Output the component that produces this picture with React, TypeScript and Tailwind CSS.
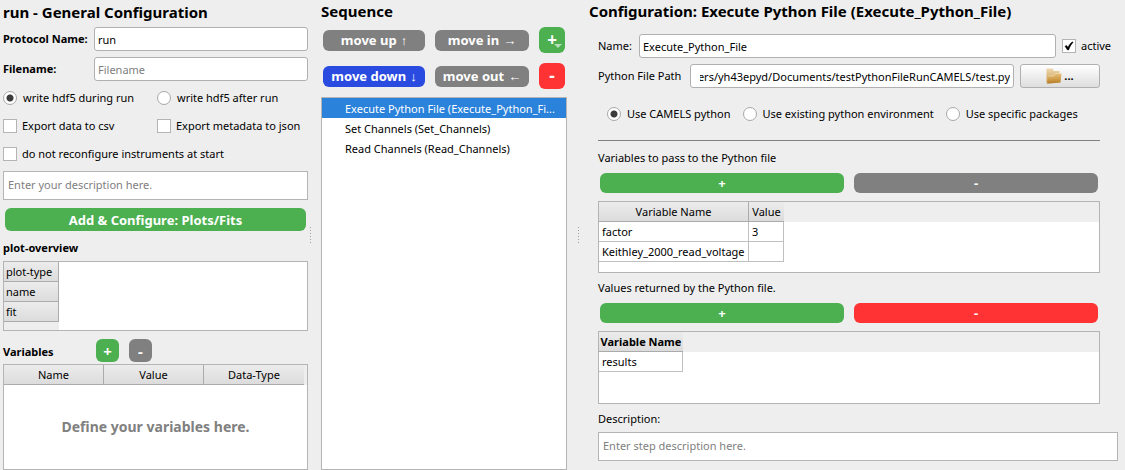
import React from "react";
import type { ReactNode } from "react";

const greys = "border border-[#b4b4b4]";
const headerCell = "h-5 border-b border-[#ababab] bg-linear-to-b from-[#ececec] to-[#dcdcdc] p-0";
const field = "h-6 min-w-0 rounded-[3px] border border-[#b0b0b0] bg-white px-[3px] pt-px placeholder:text-[#808080] outline-none";
const area = "block h-[29px] w-full resize-none overflow-hidden border border-[#b4b4b4] bg-white px-1 py-[5px] placeholder:text-[#808080] outline-none";

const buttonColors = {
  green: "bg-[#4caf50]",
  gray: "bg-[#808080]",
  blue: "bg-[#2a4be0]",
  red: "bg-[#ff3333]",
};

function ColorButton({ color, className, label, children }: { color: keyof typeof buttonColors; className: string; label?: string; children: ReactNode }) {
  return (
    <button type="button" aria-label={label} className={`flex items-center justify-center rounded-md font-bold whitespace-nowrap text-white ${buttonColors[color]} ${className}`}>
      {children}
    </button>
  );
}

function Radio({ name, label, checked = false }: { name: string; label: string; checked?: boolean }) {
  return (
    <label className="flex h-[14px] items-center gap-[6px] whitespace-nowrap">
      <input
        type="radio"
        name={name}
        defaultChecked={checked}
        className="size-[14px] shrink-0 appearance-none rounded-full border border-[#a8a8a8] bg-white checked:bg-[radial-gradient(circle,#3c3c3c_3px,#ffffff_4px)]"
      />
      {label}
    </label>
  );
}

function Check({ label, checked = false }: { label: string; checked?: boolean }) {
  return (
    <label className="flex h-[14px] items-center gap-[5px] whitespace-nowrap">
      <span className="grid size-[14px] shrink-0">
        <input type="checkbox" defaultChecked={checked} className="peer col-start-1 row-start-1 size-[14px] appearance-none border border-[#b4b4b4] bg-white" />
        <svg viewBox="0 0 14 14" className="pointer-events-none invisible col-start-1 row-start-1 size-[14px] peer-checked:visible" aria-hidden="true">
          <path d="M3 7.2 4.6 6.4 6 8.6C7 6 8.400 4 10.600 2.800L11 3.400C9 5.500 7.700 8 6.600 11H5.500Z" fill="#000" stroke="#000" strokeWidth="0.500" />
        </svg>
      </span>
      {label}
    </label>
  );
}

function FolderIcon() {
  return (
    <svg viewBox="0 0 16 16" className="size-4" aria-hidden="true">
      <defs>
        <linearGradient id="folderBack" x1="0" y1="0" x2="0" y2="1">
          <stop offset="0" stopColor="#f0d9b0" />
          <stop offset="1" stopColor="#c99a4c" />
        </linearGradient>
        <linearGradient id="folderFront" x1="0" y1="0" x2="0" y2="1">
          <stop offset="0" stopColor="#e6c07c" />
          <stop offset="0.500" stopColor="#d3a04e" />
          <stop offset="1" stopColor="#b47a26" />
        </linearGradient>
      </defs>
      <path d="M0.500 0.500H6.500L8 3H13.500V14.500H0.500Z" fill="url(#folderBack)" />
      <path d="M2.500 8H7.500L9.500 5.500H15.500L14.500 14.500L1 15.800Z" fill="url(#folderFront)" />
      <path d="M2.500 8H7.500L9.500 5.500H15.500" fill="none" stroke="#f3dfb8" strokeWidth="0.700" />
    </svg>
  );
}

function Grip({ align }: { align: string }) {
  return (
    <div className={`flex flex-col gap-[2px] self-center ${align}`} aria-hidden="true">
      {[0, 1, 2, 3, 4, 5].map((i) => (
        <span key={i} className="size-px bg-[#a0a0a0]" />
      ))}
    </div>
  );
}

function GeneralPanel() {
  return (
    <section className="flex min-w-0 flex-col pl-[3px]">
      <h1 className="h-6 text-[15px] leading-6 font-bold whitespace-nowrap">run - General Configuration</h1>
      <div className="mt-[3px] grid grid-cols-[91px_1fr] items-center gap-y-[6px]">
        <label htmlFor="protocol" className="font-bold whitespace-nowrap">Protocol Name:</label>
        <input id="protocol" defaultValue="run" className={field} />
        <label htmlFor="filename" className="font-bold">Filename:</label>
        <input id="filename" placeholder="Filename" className={field} />
      </div>
      <div className="mt-[10px] grid grid-cols-[154fr_151fr] gap-y-[14px]">
        <Radio name="write" label="write hdf5 during run" checked />
        <Radio name="write" label="write hdf5 after run" />
        <Check label="Export data to csv" />
        <Check label="Export metadata to json" />
        <div className="col-span-2">
          <Check label="do not reconfigure instruments at start" />
        </div>
      </div>
      <div className="mt-[10px]">
        <textarea aria-label="Description" placeholder="Enter your description here." className={area} />
      </div>
      <div className="mt-2 flex px-[2px]">
        <ColorButton color="green" className="h-[23px] flex-1 text-[13px]">Add &amp; Configure: Plots/Fits</ColorButton>
      </div>
      <h2 className="mt-2 h-[18px] leading-[18px] font-bold">plot-overview</h2>
      <div className={`mt-1 flex h-[70px] bg-white ${greys}`}>
        <div className="w-[55px] bg-[#eeeeee]">
          <table className="w-full border-separate border-spacing-0 text-left">
            <tbody>
              {["plot-type", "name", "fit"].map((row) => (
                <tr key={row}>
                  <th scope="row" className={`border-r font-normal whitespace-nowrap ${headerCell}`}>
                    <span className="pl-[2px]">{row}</span>
                  </th>
                </tr>
              ))}
            </tbody>
          </table>
        </div>
      </div>
      <div className="mt-2 grid h-[23px] grid-cols-[93px_23px_33px] items-center">
        <h2 className="pt-[2px] font-bold">Variables</h2>
        <ColorButton color="green" label="Add variable" className="size-[23px] text-[15px]">+</ColorButton>
        <ColorButton color="gray" label="Remove variable" className="ml-[10px] size-[23px] text-[15px]">-</ColorButton>
      </div>
      <div className={`mt-[2px] flex flex-1 flex-col bg-white ${greys}`}>
        <div className="bg-[#eeeeee] pr-[3px]">
          <table className="w-full table-fixed border-separate border-spacing-0">
            <thead>
              <tr>
                <th className={`border-r font-normal ${headerCell}`}>Name</th>
                <th className={`border-r font-normal ${headerCell}`}>Value</th>
                <th className={`font-normal ${headerCell}`}>Data-Type</th>
              </tr>
            </thead>
          </table>
        </div>
        <p className="flex flex-1 items-center justify-center text-[14px] font-bold text-[#808080]">Define your variables here.</p>
      </div>
    </section>
  );
}

function SequencePanel() {
  const steps = ["Execute Python File (Execute_Python_Fi...", "Set Channels (Set_Channels)", "Read Channels (Read_Channels)"];
  return (
    <section className="flex min-w-0 flex-col">
      <h1 className="h-[27px] text-[15px] leading-[22px] font-bold">Sequence</h1>
      <div className="grid grid-cols-[102fr_94fr_26px] items-center gap-x-[10px] gap-y-[10px] px-[2px]">
        <ColorButton color="gray" className="h-[21px] gap-1 text-[13px]">move up <span className="font-normal">↑</span></ColorButton>
        <ColorButton color="gray" className="h-[21px] gap-1 text-[13px]">move in <span className="font-normal">→</span></ColorButton>
        <ColorButton color="green" label="Add step" className="relative h-[26px] text-[17px]">
          +
          <svg viewBox="0 0 8 4" className="absolute right-[3px] bottom-[5px] h-1 w-2" aria-hidden="true">
            <path d="M0 0H8L4 4Z" fill="#b7dfb9" />
          </svg>
        </ColorButton>
        <ColorButton color="blue" className="h-[21px] gap-1 text-[13px]">move down <span className="font-normal">↓</span></ColorButton>
        <ColorButton color="gray" className="h-[21px] gap-1 text-[13px]">move out <span className="font-normal">←</span></ColorButton>
        <ColorButton color="red" label="Remove step" className="h-[26px] text-[17px]">-</ColorButton>
      </div>
      <ul className={`mt-2 flex-1 bg-white ${greys}`}>
        {steps.map((step, i) => (
          <li key={step} className={`h-5 truncate pr-1 pl-[23px] leading-[22px] ${i === 0 ? "bg-[#2a82da] text-white" : ""}`}>
            {step}
          </li>
        ))}
      </ul>
    </section>
  );
}

function AddRemove({ removeColor, what }: { removeColor: "gray" | "red"; what: string }) {
  return (
    <div className="grid grid-cols-2 gap-[10px] px-[2px]">
      <ColorButton color="green" label={`Add ${what}`} className="h-5 text-[13px]">+</ColorButton>
      <ColorButton color={removeColor} label={`Remove ${what}`} className="h-5 text-[13px]">-</ColorButton>
    </div>
  );
}

const dataCell = "h-5 border-r border-b border-[#c0c0c0] bg-white px-[3px] py-0 whitespace-nowrap";

function StepPanel() {
  return (
    <section className="flex min-w-0 flex-col">
      <h1 className="h-[34px] text-[15px] leading-[22px] font-bold whitespace-nowrap">Configuration: Execute Python File (Execute_Python_File)</h1>
      <div className="flex flex-1 flex-col pr-[7px] pl-[9px]">
        <div className="flex items-center">
          <label htmlFor="stepName" className="w-[41px]">Name:</label>
          <input id="stepName" defaultValue="Execute_Python_File" className={`flex-1 ${field}`} />
          <div className="w-[62px] pl-[6px]">
            <Check label="active" checked />
          </div>
        </div>
        <div className="flex flex-col pr-[18px]">
          <div className="mt-[6px] flex items-center">
            <label htmlFor="path" className="w-[92px] whitespace-nowrap">Python File Path</label>
            <input id="path" dir="rtl" defaultValue="C:/Users/yh43epyd/Documents/testPythonFileRunCAMELS/test.py" className={`flex-1 pl-[9px] ${field}`} />
            <button type="button" aria-label="Browse" className="ml-[6px] flex h-6 w-20 items-center justify-center gap-[2px] rounded-[3px] border border-[#b0b0b0] bg-linear-to-b from-white to-[#dedede]">
              <FolderIcon />
              <span className="font-bold">...</span>
            </button>
          </div>
          <div className="mt-[19px] flex gap-3 pl-[9px]">
            <Radio name="env" label="Use CAMELS python" checked />
            <Radio name="env" label="Use existing python environment" />
            <Radio name="env" label="Use specific packages" />
          </div>
          <hr className="mt-[19px] border-[#808080]" />
          <p className="mt-2 h-[18px] leading-[18px]">Variables to pass to the Python file</p>
          <div className="mt-[6px]">
            <AddRemove removeColor="gray" what="input variable" />
          </div>
          <div className={`mt-2 h-[72px] bg-white ${greys}`}>
            <div className="h-full bg-[linear-gradient(#eeeeee_20px,#ffffff_20px)]">
              <table className="border-separate border-spacing-0">
                <thead>
                  <tr>
                    <th className={`w-[150px] border-r font-normal ${headerCell}`}>Variable Name</th>
                    <th className={`w-[35px] font-normal ${headerCell}`}>Value</th>
                  </tr>
                </thead>
                <tbody>
                  <tr>
                    <td className={dataCell}>factor</td>
                    <td className={dataCell}>3</td>
                  </tr>
                  <tr>
                    <td className={dataCell}>Keithley_2000_read_voltage</td>
                    <td className={dataCell}></td>
                  </tr>
                </tbody>
              </table>
            </div>
          </div>
          <p className="mt-[6px] h-[18px] leading-[18px]">Values returned by the Python file.</p>
          <div className="mt-[6px]">
            <AddRemove removeColor="red" what="returned value" />
          </div>
          <div className={`mt-2 h-[73px] bg-white ${greys}`}>
            <div className="h-full bg-[linear-gradient(#eeeeee_20px,#ffffff_20px)]">
              <table className="border-separate border-spacing-0">
                <thead>
                  <tr>
                    <th className={`w-[84px] font-bold whitespace-nowrap ${headerCell}`}>Variable Name</th>
                  </tr>
                </thead>
                <tbody>
                  <tr>
                    <td className={dataCell}>results</td>
                  </tr>
                </tbody>
              </table>
            </div>
          </div>
        </div>
        <label htmlFor="stepDescription" className="mt-[6px] h-[18px] leading-[18px]">Description:</label>
        <div className="mt-1">
          <textarea id="stepDescription" placeholder="Enter step description here." className={area} />
        </div>
      </div>
    </section>
  );
}

export default function App() {
  return (
    <main className="grid min-h-screen grid-cols-[308fr_13px_246fr_22px_536fr] bg-[#eeeeee] font-['Noto_Sans','Open_Sans',sans-serif] text-[11px] leading-4 text-black">
      <GeneralPanel />
      <Grip align="items-start pl-[2px]" />
      <SequencePanel />
      <Grip align="items-center" />
      <StepPanel />
    </main>
  );
}
